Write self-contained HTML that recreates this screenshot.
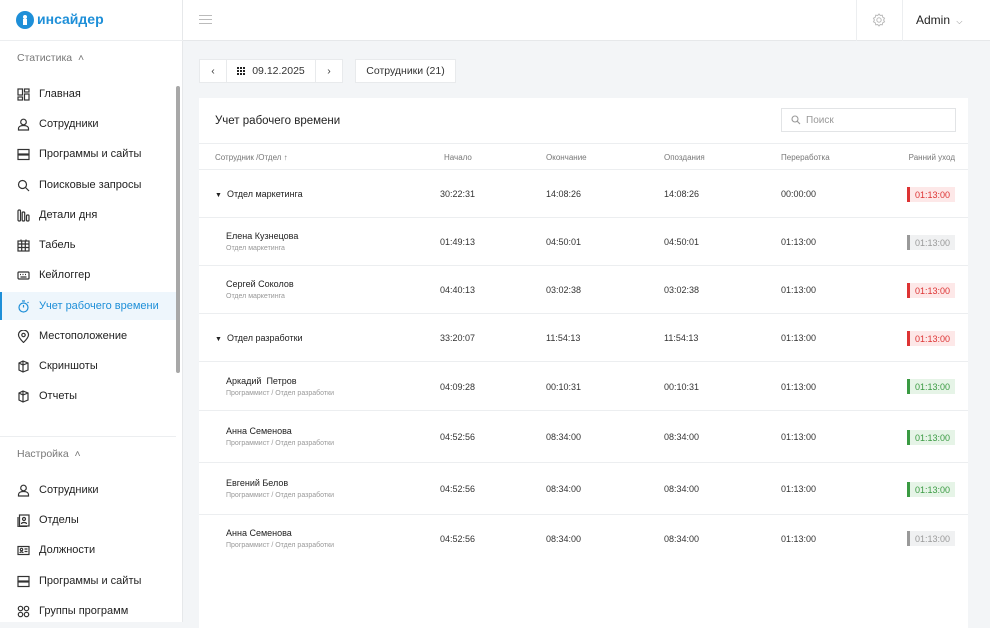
<!DOCTYPE html>
<html><head><meta charset="utf-8"><style>
*{box-sizing:border-box;margin:0;padding:0}
body{width:990px;height:622px;overflow:hidden;background:#f3f5f7;font-family:"Liberation Sans","Noto Sans CJK SC",sans-serif;color:#222;position:relative}
.abs{position:absolute}
#side{left:0;top:0;width:183px;height:622px;background:#fff;border-right:1px solid #e6e8ea}
#hdr{left:183px;top:0;width:807px;height:41px;background:#fff;border-bottom:1px solid #e6e8ea}
.nav{position:absolute;left:0;width:176px;height:28px;font-size:11px;color:#222;display:flex;align-items:center;padding-left:17px}
.nav svg{width:13px;height:13px;margin-right:9px;fill:none;stroke:#333;stroke-width:1.2;flex:none}
.nav.act{background:#eef6fc;color:#1e8fd8;border-left:2px solid #1e8fd8;padding-left:15px}
.nav.act svg{stroke:#1e8fd8}
.sec{position:absolute;left:17px;font-size:10.5px;color:#777}
.btn{position:absolute;top:59px;height:24px;background:#fff;border:1px solid #e8eaec;font-size:10.5px;display:flex;align-items:center;justify-content:center;color:#333}
#card{left:199px;top:98px;width:769px;height:530px;background:#fff}
.row{position:absolute;left:0;width:769px;border-bottom:1px solid #eceef0;font-size:9px;color:#333}
.c{position:absolute}
.nm{font-size:9px;color:#222}
.sub{font-size:7px;color:#999;margin-top:4px}
.tag{position:absolute;right:13px;width:48px;height:15px;font-size:9px;display:flex;align-items:center;justify-content:center;border-left:3px solid}
.r{background:#fde8e8;color:#d33;border-color:#d33}
.g{background:#e6f4e7;color:#3a9a42;border-color:#3a9a42}
.n{background:#f0f1f2;color:#999;border-color:#999}
</style></head><body>
<div id="side" class="abs">
 <div class="abs" style="left:16px;top:11px;width:18px;height:18px;border-radius:50%;background:#1e8fd8"></div>
 <div class="abs" style="left:23px;top:15px;width:4px;height:4px;border-radius:50%;background:#fff"></div>
 <div class="abs" style="left:23px;top:19px;width:4px;height:6px;background:#fff"></div>
 <div class="abs" style="left:37px;top:11px;font-size:14px;font-weight:bold;color:#1e8fd8">инсайдер</div>
 <div class="abs" style="left:0;top:40px;width:183px;border-top:1px solid #eceef0"></div>
 <div class="sec" style="top:52px">Статистика &nbsp;˄</div>
 <div class="nav" style="top:80px"><svg viewBox="0 0 13 13"><rect x="1" y="1" width="4.5" height="6"/><rect x="7.5" y="1" width="4.5" height="3"/><rect x="1" y="9" width="4.5" height="3"/><rect x="7.5" y="6" width="4.5" height="6"/></svg>Главная</div>
 <div class="nav" style="top:110px"><svg viewBox="0 0 13 13"><circle cx="6.5" cy="4" r="2.8"/><path d="M1.5 12v-1.5c0-1.5 1.5-3 5-3s5 1.5 5 3V12z"/></svg>Сотрудники</div>
 <div class="nav" style="top:140px"><svg viewBox="0 0 13 13"><rect x="1" y="1.5" width="11" height="4.5"/><rect x="1" y="7" width="11" height="4.5"/></svg>Программы и сайты</div>
 <div class="nav" style="top:171px"><svg viewBox="0 0 13 13"><circle cx="5.5" cy="5.5" r="4"/><path d="M8.5 8.5l3.5 3.5"/></svg>Поисковые запросы</div>
 <div class="nav" style="top:201px"><svg viewBox="0 0 13 13"><rect x="1" y="1" width="2.5" height="11" rx="1"/><rect x="5.2" y="3" width="2.5" height="9" rx="1"/><rect x="9.5" y="6" width="2.5" height="6" rx="1"/></svg>Детали дня</div>
 <div class="nav" style="top:231px"><svg viewBox="0 0 13 13"><rect x="1" y="2" width="11" height="10"/><path d="M1 5h11M1 8.5h11M4.7 2v10M8.3 2v10M4 0.5v2M9 0.5v2"/></svg>Табель</div>
 <div class="nav" style="top:261px"><svg viewBox="0 0 13 13"><rect x="1" y="3" width="11" height="7" rx="1"/><path d="M3 5.5h1M5.5 5.5h1M8 5.5h1M3.5 8h6"/></svg>Кейлоггер</div>
 <div class="nav act" style="top:292px"><svg viewBox="0 0 13 13"><circle cx="6.5" cy="7.5" r="4.5"/><path d="M6.5 7.5V5M5 1h3M10.5 3l1 -1"/></svg>Учет рабочего времени</div>
 <div class="nav" style="top:322px"><svg viewBox="0 0 13 13"><path d="M6.5 12.5C3 9 1.5 7 1.5 5a5 5 0 0110 0c0 2-1.5 4-5 7.5z"/><circle cx="6.5" cy="5" r="1.7"/></svg>Местоположение</div>
 <div class="nav" style="top:352px"><svg viewBox="0 0 13 13"><path d="M2 3l4-2 5 2v7l-5 2-4-2zM6 1v11M2 3l4 2 5-2"/></svg>Скриншоты</div>
 <div class="nav" style="top:382px"><svg viewBox="0 0 13 13"><path d="M2 3l4-2 5 2v7l-5 2-4-2zM6 1v11M2 3l4 2 5-2"/></svg>Отчеты</div>
 <div class="abs" style="left:0;top:436px;width:176px;border-top:1px solid #eceef0"></div>
 <div class="sec" style="top:448px">Настройка &nbsp;˄</div>
 <div class="nav" style="top:476px"><svg viewBox="0 0 13 13"><circle cx="6.5" cy="4" r="2.8"/><path d="M1.5 12v-1.5c0-1.5 1.5-3 5-3s5 1.5 5 3V12z"/></svg>Сотрудники</div>
 <div class="nav" style="top:506px"><svg viewBox="0 0 13 13"><rect x="2.5" y="1" width="9.5" height="11"/><path d="M1 3v10h9"/><circle cx="7" cy="5" r="1.5"/><path d="M4.5 10c0-2 5-2 5 0"/></svg>Отделы</div>
 <div class="nav" style="top:536px"><svg viewBox="0 0 13 13"><rect x="1" y="2.5" width="11" height="8"/><circle cx="4.5" cy="5.5" r="1.2"/><path d="M3 9c0-1.5 3-1.5 3 0M7.5 5h3M7.5 7.5h3"/></svg>Должности</div>
 <div class="nav" style="top:567px"><svg viewBox="0 0 13 13"><rect x="1" y="1.5" width="11" height="4.5"/><rect x="1" y="7" width="11" height="4.5"/></svg>Программы и сайты</div>
 <div class="nav" style="top:597px"><svg viewBox="0 0 13 13"><circle cx="3.5" cy="3.5" r="2.2"/><circle cx="9.5" cy="3.5" r="2.2"/><circle cx="3.5" cy="9.5" r="2.2"/><circle cx="9.5" cy="9.5" r="2.2"/></svg>Группы программ</div>
 <div class="abs" style="left:176px;top:86px;width:4px;height:287px;border-radius:2px;background:#a8a8a8"></div>
</div>
<div id="hdr" class="abs">
 <div class="abs" style="left:16px;top:15px;width:13px;height:1px;background:#bbb;box-shadow:0 4px 0 #bbb,0 8px 0 #bbb"></div>
 <div class="abs" style="left:673px;top:0;width:1px;height:41px;background:#eceef0"></div>
 <div class="abs" style="left:719px;top:0;width:1px;height:41px;background:#eceef0"></div>
 <svg class="abs" style="left:689px;top:13px" width="14" height="14" viewBox="0 0 14 14" fill="none" stroke="#bbb" stroke-width="1"><circle cx="7" cy="7" r="2.2"/><path d="M7 1l1.3 1.5 2-.3.4 2 1.8 1-0.9 1.8.9 1.8-1.8 1-.4 2-2-.3L7 13l-1.3-1.5-2 .3-.4-2-1.8-1 .9-1.8-.9-1.8 1.8-1 .4-2 2 .3z"/></svg>
 <div class="abs" style="left:733px;top:13px;font-size:12px;color:#222">Admin <span style="font-size:8px;color:#888;margin-left:3px">⌵</span></div>
</div>
<div class="btn" style="left:199px;width:28px">‹</div>
<div class="btn" style="left:226px;width:90px"><svg width="10" height="8" viewBox="0 0 10 8" style="margin-right:5px" fill="#222"><rect x="0" y="0" width="2" height="2"/><rect x="3" y="0" width="2" height="2"/><rect x="6" y="0" width="2" height="2"/><rect x="0" y="3" width="2" height="2"/><rect x="3" y="3" width="2" height="2"/><rect x="6" y="3" width="2" height="2"/><rect x="0" y="6" width="2" height="2"/><rect x="3" y="6" width="2" height="2"/><rect x="6" y="6" width="2" height="2"/></svg>09.12.2025</div>
<div class="btn" style="left:315px;width:28px">›</div>
<div class="btn" style="left:355px;width:101px">Сотрудники (21)</div>
<div id="card" class="abs">
 <div class="abs" style="left:16px;top:17px;font-size:11.5px;color:#222">Учет рабочего времени</div>
 <div class="abs" style="left:582px;top:10px;width:175px;height:24px;border:1px solid #e2e4e6;font-size:10px;color:#999;padding:6px 0 0 24px">Поиск</div>
 <svg class="abs" style="left:592px;top:17px" width="10" height="10" viewBox="0 0 10 10" fill="none" stroke="#999" stroke-width="1.1"><circle cx="4" cy="4" r="3"/><path d="M6.3 6.3L9 9"/></svg>
 <div class="row" style="top:45px;height:27px;border-top:1px solid #eceef0;color:#777;font-size:8px">
  <div class="c" style="left:16px;top:9px">Сотрудник /Отдел ↑</div>
  <div class="c" style="left:245px;top:9px">Начало</div>
  <div class="c" style="left:347px;top:9px">Окончание</div>
  <div class="c" style="left:465px;top:9px">Опоздания</div>
  <div class="c" style="left:582px;top:9px">Переработка</div>
  <div class="c" style="right:13px;top:9px">Ранний уход</div>
 </div>
 <div class="row" style="top:72px;height:48px"><div class="c nm" style="left:16px;top:19px"><span style="font-size:7px;margin-right:5px">▼</span>Отдел маркетинга</div><div class="c" style="left:241px;top:19px">30:22:31</div><div class="c" style="left:347px;top:19px">14:08:26</div><div class="c" style="left:465px;top:19px">14:08:26</div><div class="c" style="left:582px;top:19px">00:00:00</div><div class="tag r" style="top:17px">01:13:00</div></div>
 <div class="row" style="top:120px;height:48px"><div class="c" style="left:27px;top:13px"><div class="nm">Елена Кузнецова</div><div class="sub">Отдел маркетинга</div></div><div class="c" style="left:241px;top:19px">01:49:13</div><div class="c" style="left:347px;top:19px">04:50:01</div><div class="c" style="left:465px;top:19px">04:50:01</div><div class="c" style="left:582px;top:19px">01:13:00</div><div class="tag n" style="top:17px">01:13:00</div></div>
 <div class="row" style="top:168px;height:48px"><div class="c" style="left:27px;top:13px"><div class="nm">Сергей Соколов</div><div class="sub">Отдел маркетинга</div></div><div class="c" style="left:241px;top:19px">04:40:13</div><div class="c" style="left:347px;top:19px">03:02:38</div><div class="c" style="left:465px;top:19px">03:02:38</div><div class="c" style="left:582px;top:19px">01:13:00</div><div class="tag r" style="top:17px">01:13:00</div></div>
 <div class="row" style="top:216px;height:48px"><div class="c nm" style="left:16px;top:19px"><span style="font-size:7px;margin-right:5px">▼</span>Отдел разработки</div><div class="c" style="left:241px;top:19px">33:20:07</div><div class="c" style="left:347px;top:19px">11:54:13</div><div class="c" style="left:465px;top:19px">11:54:13</div><div class="c" style="left:582px;top:19px">01:13:00</div><div class="tag r" style="top:17px">01:13:00</div></div>
 <div class="row" style="top:264px;height:49px"><div class="c" style="left:27px;top:14px"><div class="nm">Аркадий&nbsp; Петров</div><div class="sub">Программист / Отдел разработки</div></div><div class="c" style="left:241px;top:20px">04:09:28</div><div class="c" style="left:347px;top:20px">00:10:31</div><div class="c" style="left:465px;top:20px">00:10:31</div><div class="c" style="left:582px;top:20px">01:13:00</div><div class="tag g" style="top:17px">01:13:00</div></div>
 <div class="row" style="top:313px;height:52px"><div class="c" style="left:27px;top:15px"><div class="nm">Анна Семенова</div><div class="sub">Программист / Отдел разработки</div></div><div class="c" style="left:241px;top:21px">04:52:56</div><div class="c" style="left:347px;top:21px">08:34:00</div><div class="c" style="left:465px;top:21px">08:34:00</div><div class="c" style="left:582px;top:21px">01:13:00</div><div class="tag g" style="top:19px">01:13:00</div></div>
 <div class="row" style="top:365px;height:52px"><div class="c" style="left:27px;top:15px"><div class="nm">Евгений Белов</div><div class="sub">Программист / Отдел разработки</div></div><div class="c" style="left:241px;top:21px">04:52:56</div><div class="c" style="left:347px;top:21px">08:34:00</div><div class="c" style="left:465px;top:21px">08:34:00</div><div class="c" style="left:582px;top:21px">01:13:00</div><div class="tag g" style="top:19px">01:13:00</div></div>
 <div class="row" style="top:417px;height:50px;border-bottom:none"><div class="c" style="left:27px;top:13px"><div class="nm">Анна Семенова</div><div class="sub">Программист / Отдел разработки</div></div><div class="c" style="left:241px;top:19px">04:52:56</div><div class="c" style="left:347px;top:19px">08:34:00</div><div class="c" style="left:465px;top:19px">08:34:00</div><div class="c" style="left:582px;top:19px">01:13:00</div><div class="tag n" style="top:16px">01:13:00</div></div>
</div>
</body></html>
